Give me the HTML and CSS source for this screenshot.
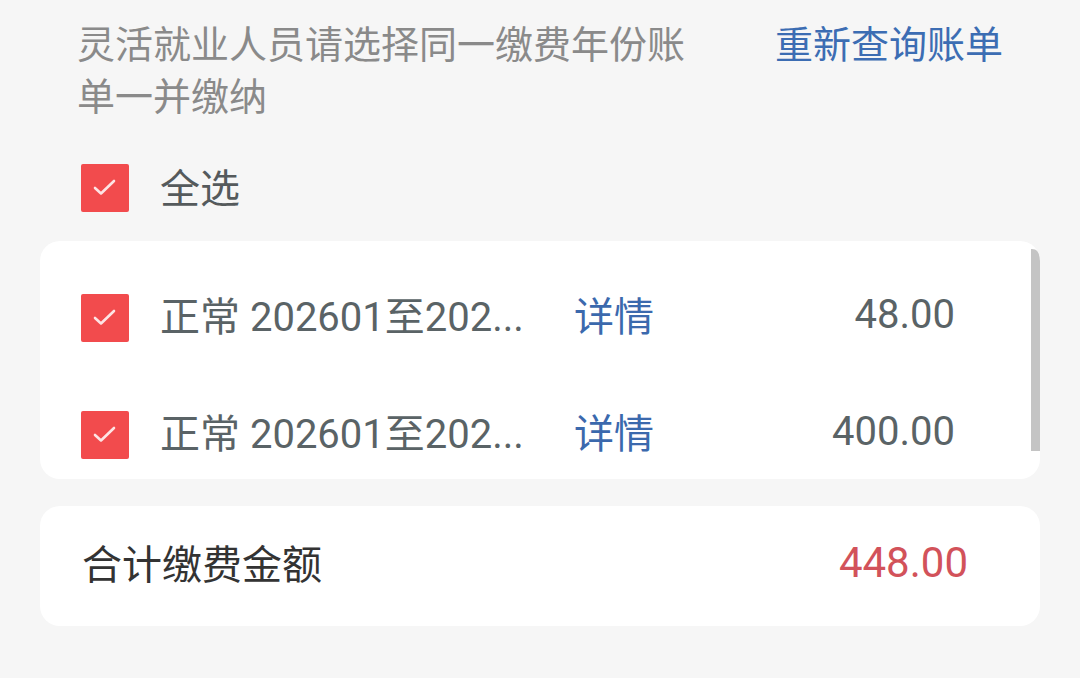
FILE: index.html
```html
<!doctype html>
<html lang="zh-CN">
<head>
	<meta charset="UTF-8">
	<title>缴费账单</title>
	<link rel="stylesheet" href="styles.css">
</head>
<body>
	<div class="page">
		<div class="tip">
			<div class="tip-text">灵活就业人员请选择同一缴费年份账单一并缴纳</div>
			<a class="requery" href="">重新查询账单</a>
		</div>

		<div class="all">
			<span class="check"><svg viewBox="0 0 48 48"><path d="M14 24 L20 29.5 L33 17"/></svg></span>
			<span class="all-label">全选</span>
		</div>

		<div class="card list">
			<div class="row">
				<span class="check"><svg viewBox="0 0 48 48"><path d="M14 24 L20 29.5 L33 17"/></svg></span>
				<span class="title">正常 202601至202...</span>
				<a class="detail" href="">详情</a>
				<span class="amount">48.00</span>
			</div>
			<div class="row">
				<span class="check"><svg viewBox="0 0 48 48"><path d="M14 24 L20 29.5 L33 17"/></svg></span>
				<span class="title">正常 202601至202...</span>
				<a class="detail" href="">详情</a>
				<span class="amount">400.00</span>
			</div>
			<div class="scrollbar"></div>
		</div>

		<div class="card total">
			<span class="total-label">合计缴费金额</span>
			<span class="total-amount">448.00</span>
		</div>
	</div>
</body>
</html>
```

FILE: styles.css
```css
body{
	margin: 0;
	background: #f6f6f6;
	font-family: Roboto, "Noto Sans CJK SC", sans-serif;
}
a{
	text-decoration: none;
}
.page{
	padding: 19px 0 0 0;
}
.tip{
	display: flex;
	justify-content: space-between;
	padding: 0 77px;
}
.tip-text{
	width: 620px;
	font-size: 38px;
	line-height: 52px;
	color: #8a8a8a;
}
.requery{
	font-size: 38px;
	line-height: 52px;
	color: #3c6db3;
}
.all{
	display: flex;
	align-items: center;
	height: 48px;
	margin-top: 41px;
	padding-left: 81px;
}
.check{
	width: 48px;
	height: 48px;
	flex: none;
	background: #f24b4d;
	border-radius: 2px;
	display: block;
}
.check svg{
	width: 48px;
	height: 48px;
	display: block;
	fill: none;
	stroke: rgba(255,255,255,0.85);
	stroke-width: 2.6;
	stroke-linecap: round;
	stroke-linejoin: round;
}
.all-label{
	margin: 0 0 4px 31px;
	font-size: 40px;
	color: #555a5c;
}
.card{
	margin: 0 40px;
	background: #fff;
	border-radius: 20px;
}
.list{
	position: relative;
	height: 238px;
	margin-top: 29px;
	padding-top: 18px;
	box-sizing: border-box;
	overflow: hidden;
}
.row{
	display: flex;
	align-items: center;
	height: 117px;
	padding: 0 85px 0 41px;
}
.title{
	width: 370px;
	margin: 0 0 7px 31px;
	font-size: 40px;
	color: #5a6366;
	white-space: nowrap;
}
.detail{
	margin: 0 0 7px 44px;
	font-size: 40px;
	color: #3b69ad;
}
.amount{
	flex: 1;
	margin-bottom: 7px;
	text-align: right;
	font-size: 40px;
	color: #5a6366;
}
.scrollbar{
	position: absolute;
	right: 0;
	top: 8px;
	width: 9px;
	height: 202px;
	background: #c4c4c4;
	border-radius: 0 8px 0 0;
}
.total{
	display: flex;
	align-items: center;
	justify-content: space-between;
	height: 120px;
	margin-top: 27px;
	padding: 0 72px 0 42px;
}
.total-label{
	margin-bottom: 8px;
	font-size: 40px;
	color: #333;
}
.total-amount{
	margin-bottom: 8px;
	font-size: 42px;
	color: #d2525a;
}
```
